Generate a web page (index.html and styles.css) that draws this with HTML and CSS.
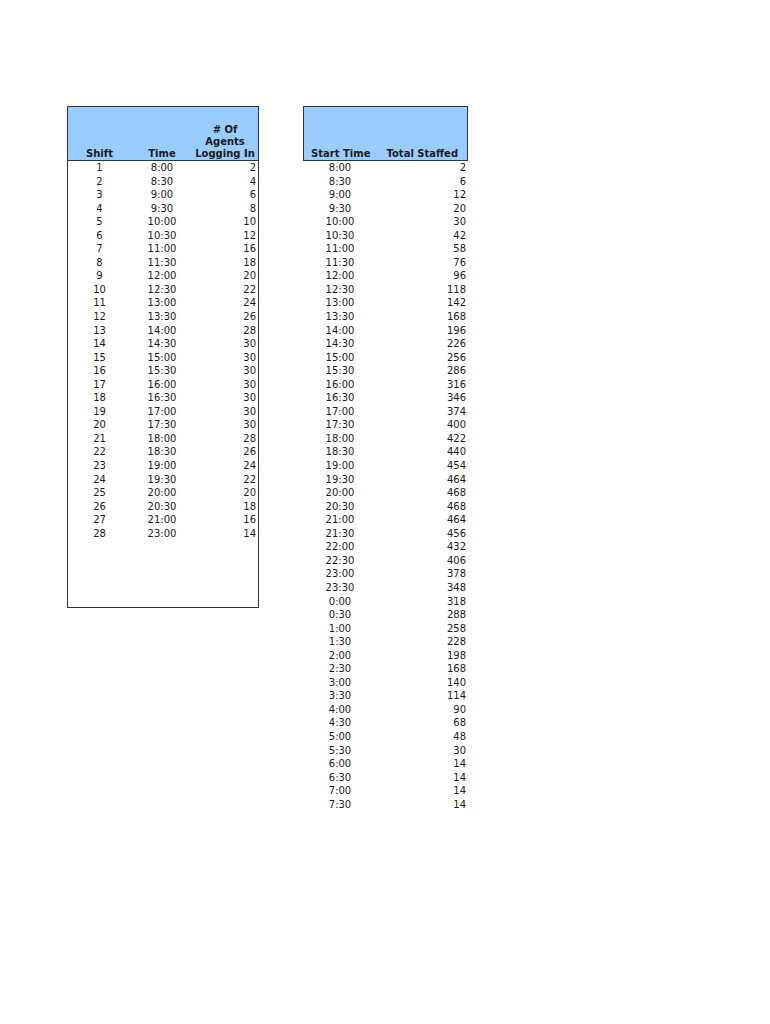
FILE: index.html
```html
<!DOCTYPE html>
<html>
<head>
<meta charset="utf-8">
<link rel="stylesheet" href="styles.css">
</head>
<body>
<div class="page">
  <div class="box left">
    <div class="head">
      <div class="c c1">Shift</div>
      <div class="c c2">Time</div>
      <div class="c c3">#&nbsp;Of<br>Agents<br>Logging In</div>
    </div>
    <div class="body" id="lbody"></div>
  </div>
  <div class="right">
    <div class="head rhead">
      <div class="c r1">Start Time</div>
      <div class="c r2">Total Staffed</div>
    </div>
    <div class="body" id="rbody"></div>
  </div>
</div>
<script src="script.js"></script>
</body>
</html>
```
FILE: styles.css
```css
html, body {
  margin: 0;
  padding: 0;
  background: #fff;
}
body {
  font-family: "DejaVu Sans", sans-serif;
  font-size: 10px;
  color: #1a1a1a;
}
.page {
  display: flex;
  align-items: flex-start;
  gap: 44px;
  padding: 106px 0 0 67px;
}
.box.left {
  width: 190px;
  border: 1px solid #333;
}
.head {
  display: flex;
  align-items: flex-end;
  height: 53px;
  background: #99ccff;
  border-bottom: 1px solid #333;
  font-weight: bold;
  line-height: 12px;
  box-sizing: border-box;
  padding-bottom: 0;
}
.left .head {
  height: 54px;
}
.rhead {
  width: 165px;
  border: 1px solid #333;
  box-sizing: border-box;
  height: 55px;
}
.c1 { width: 63px; text-align: center; }
.c2 { width: 62px; text-align: center; }
.c3 { width: 64px; text-align: center; }
.r1 { width: 74px; text-align: center; }
.r2 { width: 90px; text-align: center; }
.left .body {
  height: 446px;
}
.row {
  display: flex;
  height: 13.55px;
  line-height: 13.55px;
}
.row .a { width: 63px; text-align: center; }
.row .b { width: 62px; text-align: center; }
.row .d { width: 64px; text-align: right; padding-right: 1px; box-sizing: border-box; }
.row .s { width: 74px; text-align: center; }
.row .t { width: 90px; text-align: right; padding-right: 1px; box-sizing: border-box; }
```
FILE: script.js
```js
var ltimes = ["8:00","8:30","9:00","9:30","10:00","10:30","11:00","11:30","12:00","12:30","13:00","13:30","14:00","14:30","15:00","15:30","16:00","16:30","17:00","17:30","18:00","18:30","19:00","19:30","20:00","20:30","21:00","23:00"];
var lagents = [2,4,6,8,10,12,16,18,20,22,24,26,28,30,30,30,30,30,30,30,28,26,24,22,20,18,16,14];
var lb = document.getElementById("lbody");
for (var i = 0; i < ltimes.length; i++) {
  var r = document.createElement("div");
  r.className = "row";
  r.innerHTML = '<div class="a">' + (i + 1) + '</div><div class="b">' + ltimes[i] + '</div><div class="d">' + lagents[i] + '</div>';
  lb.appendChild(r);
}
var rtimes = ["8:00","8:30","9:00","9:30","10:00","10:30","11:00","11:30","12:00","12:30","13:00","13:30","14:00","14:30","15:00","15:30","16:00","16:30","17:00","17:30","18:00","18:30","19:00","19:30","20:00","20:30","21:00","21:30","22:00","22:30","23:00","23:30","0:00","0:30","1:00","1:30","2:00","2:30","3:00","3:30","4:00","4:30","5:00","5:30","6:00","6:30","7:00","7:30"];
var rvals = [2,6,12,20,30,42,58,76,96,118,142,168,196,226,256,286,316,346,374,400,422,440,454,464,468,468,464,456,432,406,378,348,318,288,258,228,198,168,140,114,90,68,48,30,14,14,14,14];
var rb = document.getElementById("rbody");
for (var j = 0; j < rtimes.length; j++) {
  var q = document.createElement("div");
  q.className = "row";
  q.innerHTML = '<div class="s">' + rtimes[j] + '</div><div class="t">' + rvals[j] + '</div>';
  rb.appendChild(q);
}
```
